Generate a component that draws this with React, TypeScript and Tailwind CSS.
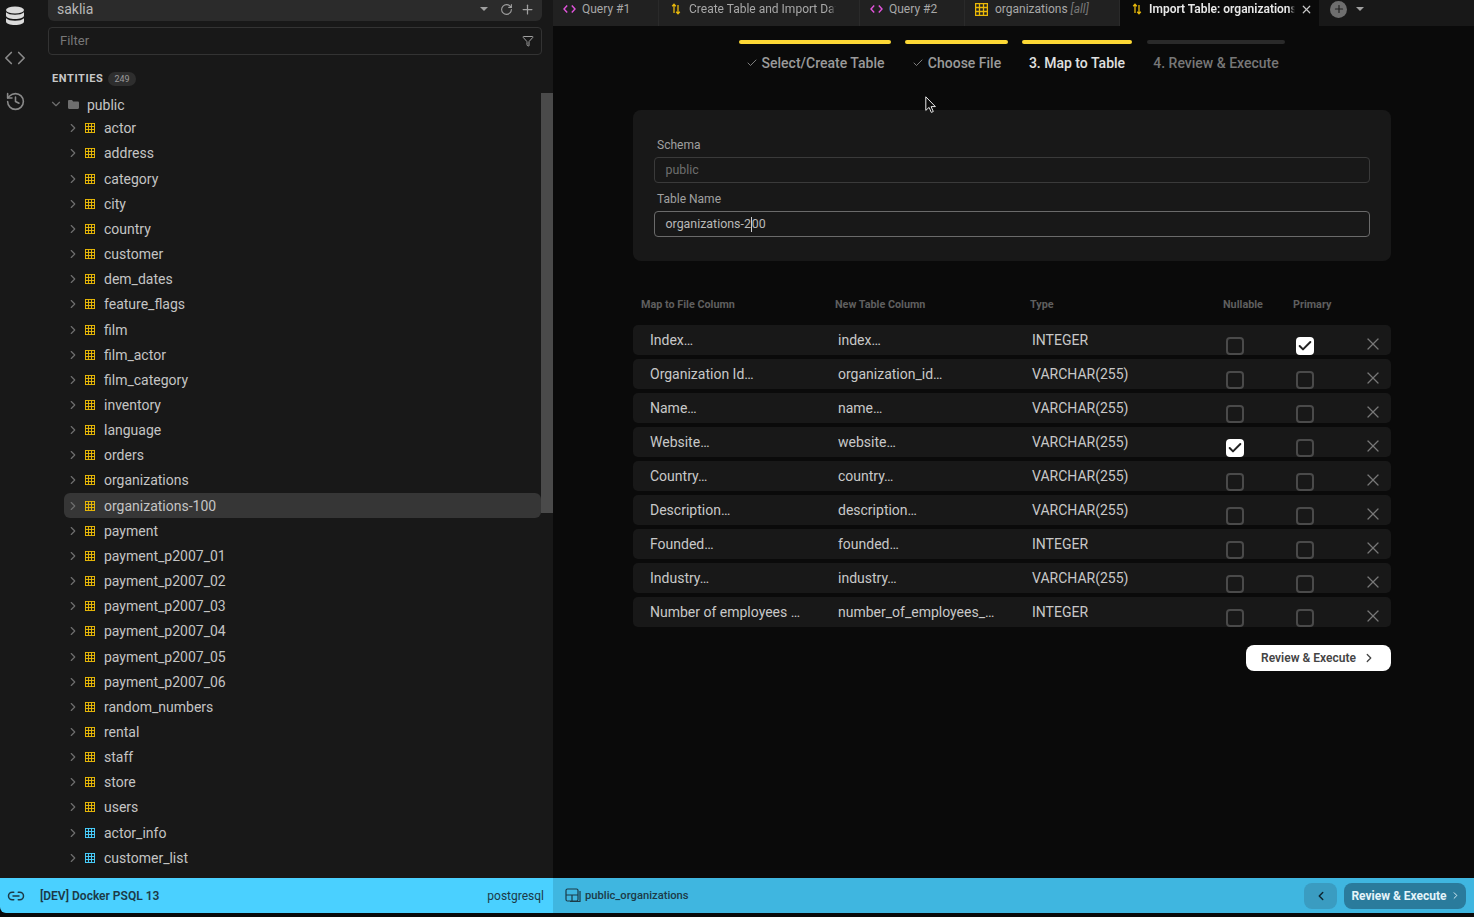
import React from 'react';
import { Check, ChevronDown, ChevronLeft, ChevronRight, Code, Funnel, History, Link2, Plus, RotateCw, X } from 'lucide-react';

const tables = [
  'actor', 'address', 'category', 'city', 'country', 'customer', 'dem_dates', 'feature_flags', 'film', 'film_actor',
  'film_category', 'inventory', 'language', 'orders', 'organizations', 'organizations-100', 'payment', 'payment_p2007_01',
  'payment_p2007_02', 'payment_p2007_03', 'payment_p2007_04', 'payment_p2007_05', 'payment_p2007_06', 'random_numbers',
  'rental', 'staff', 'store', 'users',
];
const views = ['actor_info', 'customer_list'];

const columns = [
  { file: 'Index…', name: 'index…', type: 'INTEGER', nullable: false, primary: true },
  { file: 'Organization Id…', name: 'organization_id…', type: 'VARCHAR(255)', nullable: false, primary: false },
  { file: 'Name…', name: 'name…', type: 'VARCHAR(255)', nullable: false, primary: false },
  { file: 'Website…', name: 'website…', type: 'VARCHAR(255)', nullable: true, primary: false },
  { file: 'Country…', name: 'country…', type: 'VARCHAR(255)', nullable: false, primary: false },
  { file: 'Description…', name: 'description…', type: 'VARCHAR(255)', nullable: false, primary: false },
  { file: 'Founded…', name: 'founded…', type: 'INTEGER', nullable: false, primary: false },
  { file: 'Industry…', name: 'industry…', type: 'VARCHAR(255)', nullable: false, primary: false },
  { file: 'Number of employees …', name: 'number_of_employees_…', type: 'INTEGER', nullable: false, primary: false },
];

const steps = [
  { label: 'Select/Create Table', width: 'w-[152px]', bar: 'bg-[#fdd835]', text: 'text-[#9a9a9a]', done: true },
  { label: 'Choose File', width: 'w-[103px]', bar: 'bg-[#fdd835]', text: 'text-[#9a9a9a]', done: true },
  { label: '3. Map to Table', width: 'w-[110px]', bar: 'bg-[#fdd835]', text: 'text-[#e0e0e0]', done: false },
  { label: '4. Review & Execute', width: 'w-[138px] ml-[1px]', bar: 'bg-[#2a2a2a]', text: 'text-[#777777]', done: false },
];

const ImportIcon = () => (
  <svg width="10" height="12" viewBox="0 0 10 12" fill="none" stroke="#e8b90c" strokeWidth="1.3">
    <path d="M3 10V1.5M1.2 3.2 3 1.3l1.8 1.9" />
    <path d="M7 2v8.5M5.2 8.8 7 10.7l1.8-1.9" />
  </svg>
);

const CodeTabIcon = () => (
  <svg width="13" height="10" viewBox="0 0 13 10" fill="none" stroke="#e254dc" strokeWidth="1.4">
    <path d="M4.2 1.5 1 5l3.2 3.5M8.8 1.5 12 5 8.8 8.500" />
  </svg>
);

const GridIcon = ({ className, size = 10 }: { className: string; size?: number }) => (
  <svg width={size} height={size} viewBox="0 0 11 11" fill="none" stroke="currentColor" strokeWidth="1.100" className={className}>
    <rect x=".5" y=".5" width="10" height="10" />
    <path d="M3.800.5v10M7.200.5v10M.5 3.800h10M.5 7.200h10" />
  </svg>
);

const DbIcon = () => (
  <svg width="20" height="20" viewBox="0 0 20 20" fill="#dcdcdc">
    <ellipse cx="10" cy="4" rx="9" ry="3.600" />
    <path d="M1 6.200c1.600 1.700 5 2.500 9 2.500s7.400-.8 9-2.500v3.300c0 2-4 3.500-9 3.500s-9-1.500-9-3.500z" />
    <path d="M1 12.200c1.600 1.700 5 2.500 9 2.500s7.400-.8 9-2.500v3.300c0 2-4 3.500-9 3.500s-9-1.500-9-3.500z" />
  </svg>
);

const Tab = ({ icon, width, children }: { icon: React.ReactNode; width: string; children: React.ReactNode }) => (
  <div className={`flex h-full ${width} shrink-0 items-center gap-[7px] overflow-hidden border-r border-[#2a2a2a] bg-[#212121] pb-[8px] pl-[10px] text-xs whitespace-nowrap text-[#a8a8a8]`}>
    <span className="flex w-[13px] shrink-0 justify-center">{icon}</span>
    {children}
  </div>
);

const TreeRow = ({ name, view, active }: { name: string; view?: boolean; active?: boolean }) => (
  <div className={`ml-[16px] mr-[12px] flex h-[25.17px] shrink-0 items-center rounded-md pl-[2px] ${active ? 'bg-[#363636]' : ''}`}>
    <ChevronRight size={14} className="shrink-0 text-[#6e6e6e]" />
    <GridIcon className={`ml-[5px] shrink-0 ${view ? 'text-[#4ad0ff]' : 'text-[#eab908]'}`} />
    <span className="ml-[9px] text-sm text-[#c4c4c4]">{name}</span>
  </div>
);

const Checkbox = ({ on }: { on: boolean }) =>
  on ? (
    <span className="flex size-[18px] items-center justify-center rounded-[4px] bg-white">
      <Check size={16} strokeWidth={3} className="text-[#222222]" />
    </span>
  ) : (
    <span className="size-[18px] rounded-[4px] border-2 border-[#4a4a4a]" />
  );

export default function App() {
  return (
    <div className="relative flex h-[917px] w-[1474px] flex-col overflow-hidden bg-[#0a0a0a] font-['Roboto',sans-serif]">
      <div className="flex h-[878px] shrink-0">
        {/* left rail */}
        <div className="flex w-[48px] shrink-0 flex-col items-center bg-[#181818] pr-[18px] pt-[6px] text-[#8a8a8a]">
          <DbIcon />
          <Code size={22} strokeWidth={1.8} className="mt-[21px]" />
          <History size={21} strokeWidth={1.8} className="mt-[22px]" />
        </div>

        {/* sidebar */}
        <div className="relative flex w-[505px] shrink-0 flex-col overflow-hidden bg-[#181818]">
          <div className="mr-[11px] flex h-[21px] shrink-0 items-center rounded-b-md bg-[#2b2b2b] pb-[3px] pl-[9px] pr-[7px]">
            <span className="text-sm text-[#b8b8b8]">saklia</span>
            <span className="ml-auto h-0 w-0 border-x-[4px] border-t-[4px] border-x-transparent border-t-[#a0a0a0]" />
            <RotateCw size={13} className="ml-[12px] text-[#a0a0a0]" />
            <Plus size={15} className="ml-[7px] text-[#a0a0a0]" />
          </div>
          <div className="mr-[11px] mt-[6px] flex h-[28px] shrink-0 items-center rounded-[4px] border border-[#333333] bg-[#181818] pl-[11px] pr-[7px]">
            <span className="text-[13px] text-[#777777]">Filter</span>
            <Funnel size={12} className="ml-auto text-[#a0a0a0]" />
          </div>
          <div className="ml-[4px] mt-[16px] flex h-[16px] shrink-0 items-center gap-[5px]">
            <span className="text-[11px] font-bold tracking-[0.6px] text-[#c8c8c8]">ENTITIES</span>
            <span className="rounded-full bg-[#2e2e2e] px-[6px] text-[9px] leading-[14px] text-[#9a9a9a]">249</span>
          </div>
          <div className="mt-[6px] flex min-h-0 flex-1 flex-col overflow-hidden">
            <div className="ml-[1px] flex h-[22.7px] shrink-0 items-center">
              <ChevronDown size={14} className="text-[#6e6e6e]" />
              <svg width="11" height="9" viewBox="0 0 11 9" fill="#6e6e6e" className="ml-[5px]">
                <path d="M0 1.200C0 .5.500 0 1.200 0h2.800l1.200 1.400h4.600c.7 0 1.200.5 1.200 1.200v5.200c0 .7-.5 1.200-1.200 1.200H1.200C.5 9 0 8.500 0 7.800z" />
              </svg>
              <span className="ml-[8px] pt-[2px] text-sm text-[#c4c4c4]">public</span>
            </div>
            {tables.map((t) => (
              <TreeRow key={t} name={t} active={t === 'organizations-100'} />
            ))}
            {views.map((t) => (
              <TreeRow key={t} name={t} view />
            ))}
          </div>
          <div className="absolute right-0 top-[93px] h-[420px] w-[12px] bg-[#4a4a4a]" />
        </div>

        {/* main panel */}
        <div className="flex min-w-0 flex-1 flex-col">
          <div className="flex h-[26px] shrink-0 items-center bg-[#181818]">
            <Tab icon={<CodeTabIcon />} width="w-[106px]"><span className="-ml-[1px]">Query #1</span></Tab>
            <Tab icon={<ImportIcon />} width="w-[201px]">
              <span className="w-[147px] overflow-hidden [mask-image:linear-gradient(to_left,transparent,black_7px)]">Create Table and Import Data</span>
            </Tab>
            <Tab icon={<CodeTabIcon />} width="w-[105px]"><span className="-ml-[1px]">Query #2</span></Tab>
            <Tab icon={<GridIcon size={13} className="text-[#eab908]" />} width="w-[155px]">
              <span>organizations <i className="text-[#777777]">[all]</i></span>
            </Tab>
            <div className="flex h-full w-[199px] shrink-0 items-center gap-[6px] bg-[#0a0a0a] pb-[8px] pl-[10px] text-xs font-semibold whitespace-nowrap text-[#e8e8e8]">
              <span className="flex w-[13px] shrink-0 justify-center"><ImportIcon /></span>
              <span className="w-[146px] overflow-hidden [mask-image:linear-gradient(to_left,transparent,black_6px)]">Import Table: organizations-200</span>
              <X size={13} strokeWidth={2.2} className="-ml-[1px] shrink-0 text-[#c8c8c8]" />
            </div>
            <span className="-mt-[8px] ml-[11px] flex size-[17px] items-center justify-center rounded-full bg-[#6e6e6e]">
              <Plus size={12} strokeWidth={2.4} className="text-[#212121]" />
            </span>
            <span className="-mt-[8px] ml-[9px] h-0 w-0 border-x-[4px] border-t-[4px] border-x-transparent border-t-[#a0a0a0]" />
          </div>

          <div className="flex flex-1 flex-col items-center pr-[3px]">
            <div className="mt-[14px] flex gap-[14px]">
              {steps.map((s) => (
                <div key={s.label} className={`flex ${s.width} flex-col items-center`}>
                  <div className={`h-[4px] w-full rounded-full ${s.bar}`} />
                  <div className={`mt-[9px] flex items-center gap-[4px] text-sm font-medium whitespace-nowrap ${s.text}`}>
                    {s.done && <Check size={12} strokeWidth={1.6} />}
                    {s.label}
                  </div>
                </div>
              ))}
            </div>

            <div className="mt-[37px] flex h-[151px] w-[758px] shrink-0 flex-col rounded-lg bg-[#181818] pl-[21px] pr-[21px] pt-[27px]">
              <label className="ml-[3px] text-xs leading-[16px] text-[#a0a0a0]">Schema</label>
              <div className="mt-[4px] flex h-[26px] items-center rounded-[4px] border border-[#3a3a3a] pl-[10.5px] text-[12.4px] text-[#6e6e6e]">public</div>
              <label className="ml-[3px] mt-[8px] text-xs leading-[16px] text-[#a0a0a0]">Table Name</label>
              <div className="mt-[4px] flex h-[26px] items-center rounded-[4px] border border-[#6a6a6a] pl-[10.5px] text-[12.4px] text-[#b8b8b8]">
                organizations-2<span className="h-[15px] w-px bg-[#d0d0d0]" />00
              </div>
            </div>

            <div className="mt-[38px] flex h-[12px] w-[758px] shrink-0 items-center text-[10.8px] font-bold text-[#5f5f5f]">
              <span className="ml-[8px] w-[194px]">Map to File Column</span>
              <span className="w-[195px]">New Table Column</span>
              <span className="w-[193px]">Type</span>
              <span className="w-[70px]">Nullable</span>
              <span>Primary</span>
            </div>

            <div className="mt-[14px] flex w-[758px] shrink-0 flex-col gap-[4px]">
              {columns.map((c) => (
                <div key={c.name} className="flex h-[30px] rounded-[5px] bg-[#181818] text-sm text-[#c8c8c8]">
                  <span className="ml-[17px] mt-[5px] w-[188px] whitespace-nowrap">{c.file}</span>
                  <span className="mt-[5px] w-[194px] whitespace-nowrap">{c.name}</span>
                  <span className="mt-[5px] w-[194px] whitespace-nowrap">{c.type}</span>
                  <div className="mt-[12px] flex w-[70px] shrink-0">
                    <Checkbox on={c.nullable} />
                  </div>
                  <div className="mt-[12px] flex w-[67px] shrink-0">
                    <Checkbox on={c.primary} />
                  </div>
                  <X size={20} strokeWidth={1.5} className="mt-[9px] text-[#777777]" />
                </div>
              ))}
            </div>

            <div className="mt-[18px] flex w-[758px] shrink-0 justify-end">
              <div className="flex h-[26px] w-[145px] items-center justify-center gap-[6px] rounded-lg bg-white text-xs font-semibold text-[#444444]">
                Review &amp; Execute
                <ChevronRight size={14} strokeWidth={2.2} />
              </div>
            </div>
          </div>
        </div>
      </div>

      {/* status bar */}
      <div className="flex h-[35px] shrink-0">
        <div className="flex w-[553px] shrink-0 items-center rounded-bl-md bg-[#4ad0ff] pl-[7px] pr-[9px] text-[#1c3a47]">
          <Link2 size={18} strokeWidth={2} />
          <span className="ml-[15px] text-xs font-semibold">[DEV] Docker PSQL 13</span>
          <span className="ml-auto text-xs">postgresql</span>
        </div>
        <div className="flex flex-1 items-center bg-[#3fb6e0] pl-[12px] pr-[8px] text-[#1c3a47]">
          <svg width="16" height="15" viewBox="0 0 16 15" fill="none" stroke="#1c3a47" strokeWidth="1.200">
            <rect x="1" y="1" width="12" height="12" rx="1.500" />
            <path d="M1 7h12M7 7v6M15 3v10.500H5" />
          </svg>
          <span className="ml-[4px] pt-[1px] text-[11.2px] font-medium">public_organizations</span>
          <span className="ml-auto flex h-[26px] w-[33px] items-center justify-center rounded-lg bg-[#3a9cc1]">
            <ChevronLeft size={14} strokeWidth={2.5} className="text-[#0e2630]" />
          </span>
          <span className="ml-[7px] flex h-[26px] w-[122px] items-center justify-center gap-[3px] rounded-lg bg-[#2a7b9c] pl-[2px] text-xs font-bold text-[#e4f4fa]">
            Review &amp; Execute
            <ChevronRight size={11} />
          </span>
        </div>
      </div>

      {/* mouse pointer */}
      <svg width="12" height="18" viewBox="0 0 12 18" className="absolute left-[925px] top-[96px]" fill="#0a0a0a" stroke="#e8e8e8" strokeWidth="1">
        <path d="M.8.8v13.600l3.300-3 2.200 5 2-.9-2.200-4.900h4.300z" />
      </svg>
    </div>
  );
}
